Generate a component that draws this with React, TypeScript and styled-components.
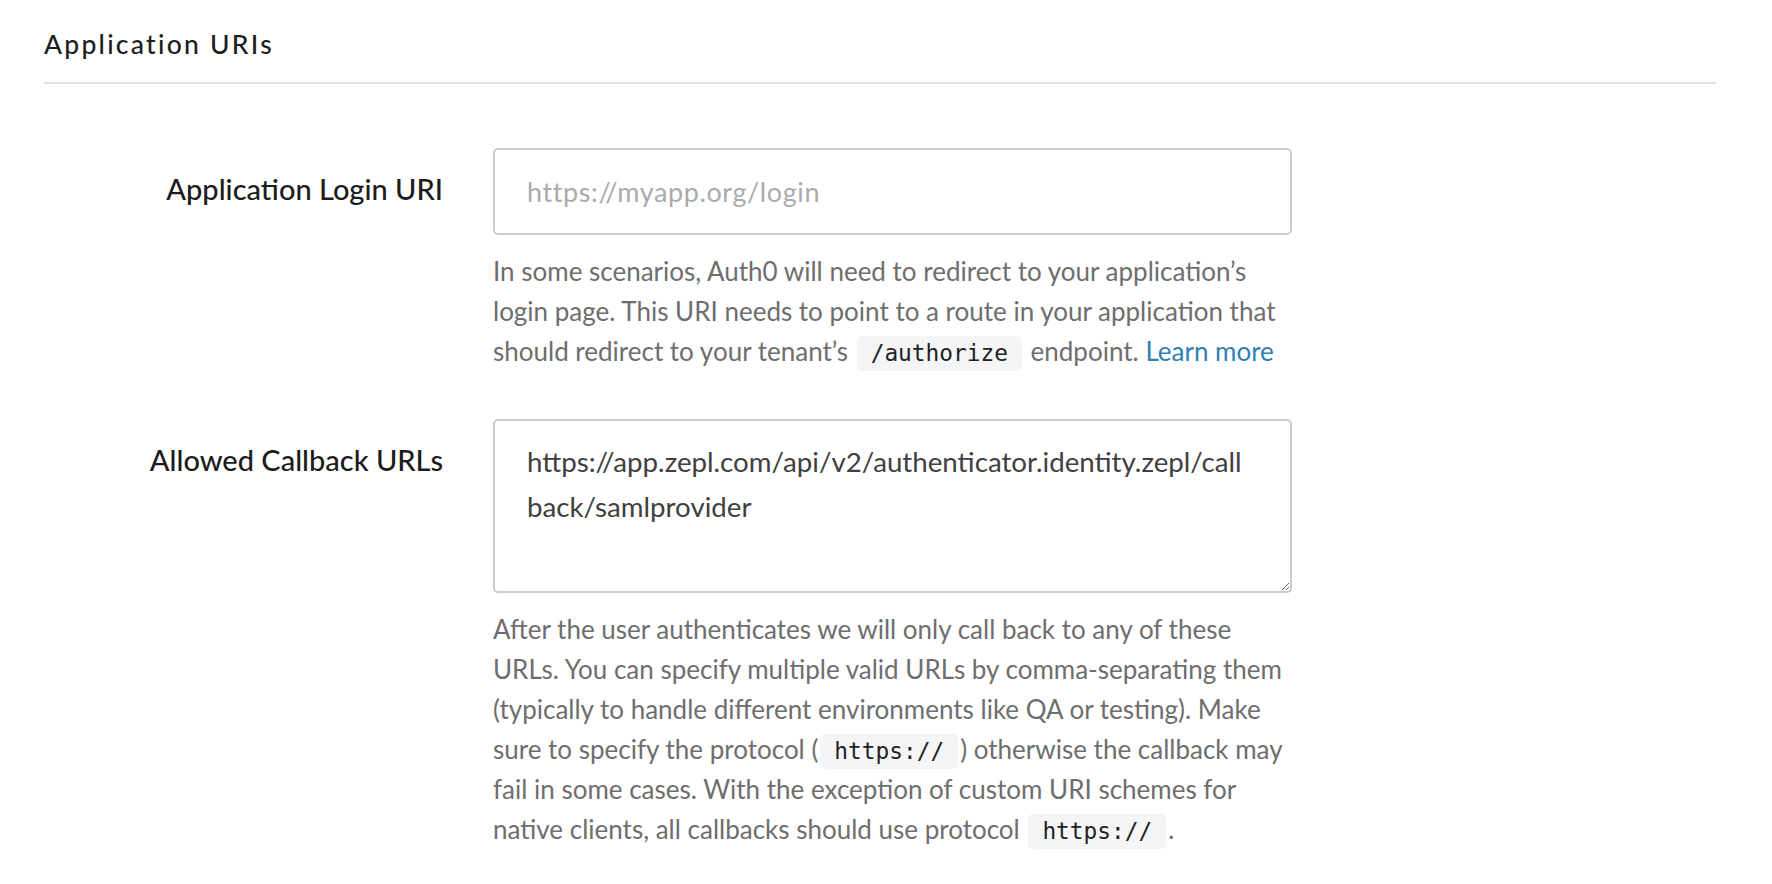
import React from 'react';
import styled, { createGlobalStyle } from 'styled-components';

const GlobalStyle = createGlobalStyle`
  html, body {
    margin: 0;
    padding: 0;
    background: #ffffff;
  }

  body {
    font-family: Lato, "Open Sans", "Liberation Sans", sans-serif;
    color: #222222;
  }
`;

const Page = styled.div`
  padding: 28px 56px 40px 44px;
`;

const SectionHeader = styled.div`
  padding-bottom: 22px;
  border-bottom: 2px solid #e2e2e2;
`;

const SectionTitle = styled.h2`
  margin: 0;
  font-size: 26.5px;
  line-height: 32px;
  font-weight: 500;
  letter-spacing: 2.25px;
  color: #1e1e1e;
`;

const Form = styled.div`
  margin-top: 64px;
  display: flex;
  flex-direction: column;
  gap: 48px;
`;

const FieldRow = styled.div`
  display: grid;
  grid-template-columns: 399px 799px;
  column-gap: 50px;
  align-items: start;
`;

const Label = styled.label`
  padding-top: 25px;
  text-align: right;
  font-size: 29px;
  line-height: 32px;
  font-weight: 500;
  color: #1c1c1c;
`;

const Field = styled.div`
  display: flex;
  flex-direction: column;
  gap: 16px;
`;

const TextInput = styled.input`
  box-sizing: border-box;
  width: 100%;
  height: 87px;
  padding: 0 32px;
  border: 2px solid #cccccc;
  border-radius: 5px;
  font-family: inherit;
  font-size: 27px;
  letter-spacing: 0.6px;
  color: #333333;
  outline: none;

  &::placeholder {
    color: #ababab;
  }
`;

const TextArea = styled.textarea`
  box-sizing: border-box;
  display: block;
  width: 100%;
  height: 174px;
  padding: 18px 42px 14px 32px;
  border: 2px solid #cccccc;
  border-radius: 5px;
  font-family: inherit;
  font-size: 27.7px;
  line-height: 45px;
  color: #404040;
  outline: none;
  resize: vertical;
`;

const Help = styled.p`
  margin: 0;
  font-size: 26px;
  line-height: 40px;
  color: #6e6e6e;
`;

const Code = styled.code`
  display: inline-block;
  padding: 0 14px;
  margin: 0 2px;
  line-height: 35px;
  border-radius: 5px;
  background: #f4f5f7;
  font-family: "DejaVu Sans Mono", "Liberation Mono", monospace;
  font-size: 22.8px;
  color: #222222;
`;

const Link = styled.a`
  color: #2f7fb1;
  text-decoration: none;
`;

const App: React.FC = () => {
  return (
    <>
      <GlobalStyle />
      <Page>
        <SectionHeader>
          <SectionTitle>Application URIs</SectionTitle>
        </SectionHeader>
        <Form>
          <FieldRow>
            <Label htmlFor="login-uri">Application Login URI</Label>
            <Field>
              <TextInput id="login-uri" placeholder="https://myapp.org/login" />
              <Help>
                In some scenarios, Auth0 will need to redirect to your application’s login page.
                This URI needs to point to a route in your application that should redirect to
                your tenant’s <Code>/authorize</Code> endpoint. <Link href="#">Learn more</Link>
              </Help>
            </Field>
          </FieldRow>
          <FieldRow>
            <Label htmlFor="callbacks">Allowed Callback URLs</Label>
            <Field>
              <TextArea
                id="callbacks"
                defaultValue="https://app.zepl.com/api/v2/authenticator.identity.zepl/callback/samlprovider"
              />
              <Help>
                After the user authenticates we will only call back to any of these URLs. You can
                specify multiple valid URLs by comma-separating them (typically to handle different
                environments like QA or testing). Make sure to specify the protocol (
                <Code>https://</Code>) otherwise the callback may fail in some cases. With the
                exception of custom URI schemes for native clients, all callbacks should use
                protocol <Code>https://</Code>.
              </Help>
            </Field>
          </FieldRow>
        </Form>
      </Page>
    </>
  );
};

export default App;
